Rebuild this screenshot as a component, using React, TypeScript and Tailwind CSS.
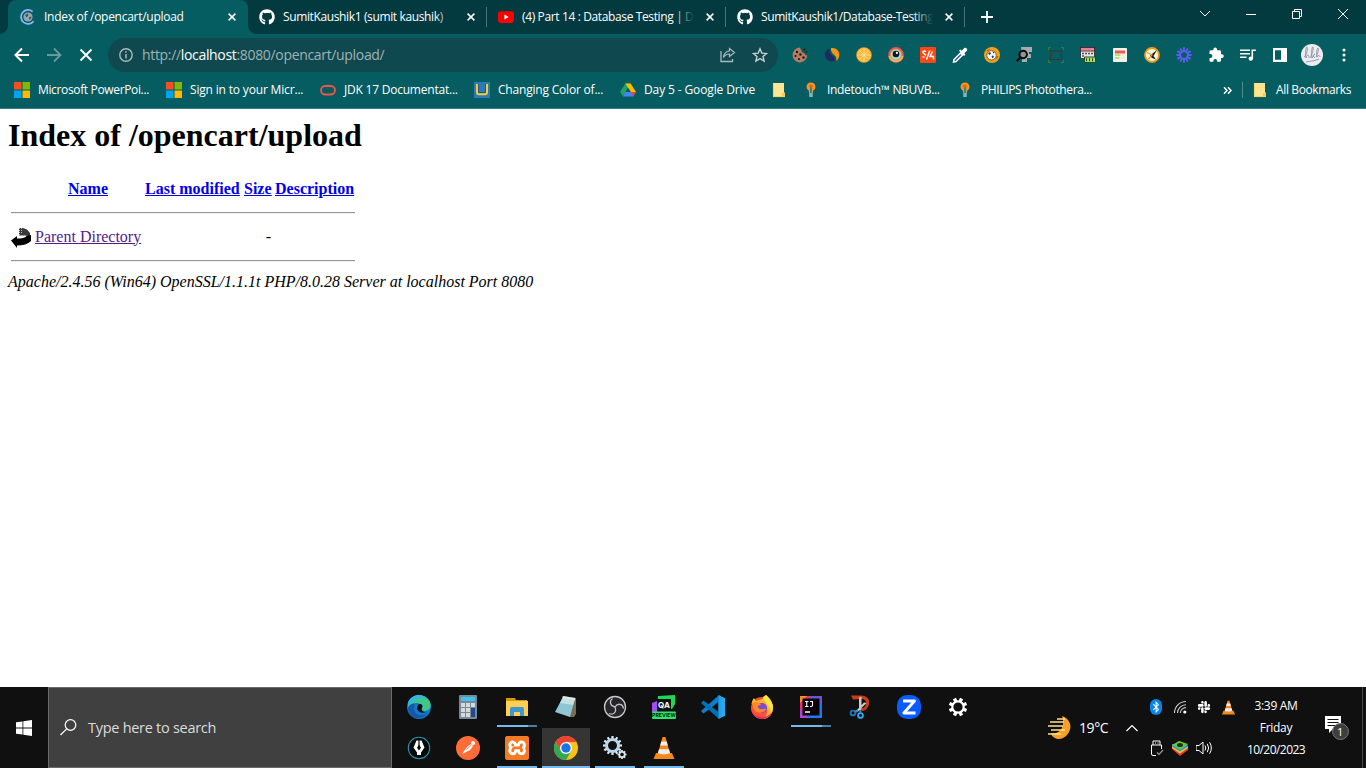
import type { ReactNode } from "react";
import { FaGithub, FaSlack, FaBluetoothB } from "react-icons/fa";
import { SiXampp } from "react-icons/si";

function Svg({ size = 16, box = 16, children }: { size?: number; box?: number; children: ReactNode }) {
  return (
    <svg width={size} height={size} viewBox={`0 0 ${box} ${box}`} fill="none" className="block shrink-0">
      {children}
    </svg>
  );
}

/* ---------- tab strip ---------- */

const Spinner = () => (
  <Svg>
    <path d="M12.6 2.6A7 7 0 1 0 13.6 12.2" stroke="#8ab4f8" strokeWidth="1.8" />
    <circle cx="8" cy="8" r="4.6" fill="#9aa5ad" />
    <path d="M5 6.2l2.4-1.7 1.2 1.3-1.8 2.6zM9 8.2l2.6-.6-.8 2.4-1.6.8z" fill="#2c5f66" />
  </Svg>
);
const YouTube = () => (
  <Svg>
    <rect y="2.3" width="16" height="11.6" rx="2.8" fill="#f00" />
    <path d="M6.4 5.6v4.9L10.6 8z" fill="#fff" />
  </Svg>
);
const Close = () => (
  <Svg size={8} box={8}>
    <path d="M.6.6l6.8 6.8M7.4.6L.6 7.4" stroke="#fff" strokeWidth="1.5" />
  </Svg>
);

function Tab({ icon, title, track, active }: { icon: ReactNode; title: string; track: string; active?: boolean }) {
  return (
    <div
      className={`relative flex h-[34px] shrink-0 items-center pr-3 ${
        active ? "w-60 rounded-t-lg bg-[#055c61] pl-3" : "w-[239px] pl-[11px]"
      }`}
    >
      {icon}
      <div className="relative ml-2 h-5 w-[172px] overflow-hidden">
        <span className={`block whitespace-nowrap leading-5 text-white ${track}`}>{title}</span>
        {!active && <i className="absolute right-0 top-0 h-5 w-5 bg-gradient-to-r from-transparent to-[#033a40]" />}
      </div>
      <span className="ml-auto">
        <Close />
      </span>
      {!active && <i className="absolute right-0 top-[7px] h-5 w-px bg-[#4b7377]" />}
      {active && (
        <>
          <i className="absolute -left-2 bottom-0 size-2 bg-[radial-gradient(circle_at_0_0,#033a40_7.5px,#055c61_8px)]" />
          <i className="absolute -right-2 bottom-0 size-2 bg-[radial-gradient(circle_at_100%_0,#033a40_7.5px,#055c61_8px)]" />
        </>
      )}
    </div>
  );
}

function TabStrip() {
  return (
    <header className="flex h-[34px] shrink-0 bg-[#033a40] pl-2 text-xs">
      <Tab active icon={<Spinner />} title="Index of /opencart/upload" track="tracking-[-0.28px]" />
      <Tab icon={<FaGithub className="size-4 text-white" />} title="SumitKaushik1 (sumit kaushik)" track="tracking-[-0.37px]" />
      <Tab icon={<YouTube />} title="(4) Part 14 : Database Testing | D" track="tracking-[-0.37px]" />
      <Tab icon={<FaGithub className="size-4 text-white" />} title="SumitKaushik1/Database-Testing" track="tracking-[-0.4px]" />
      <div className="flex w-11 items-center justify-center">
        <Svg size={12} box={12}>
          <path d="M6 0v12M0 6h12" stroke="#fff" strokeWidth="1.8" />
        </Svg>
      </div>
      <div className="ml-auto flex h-7 w-[184px]">
        {[
          <path key="a" d="M1 3l5 5 5-5" />,
          <path key="b" d="M1 6.5h10" />,
          <path key="c" d="M1.5 3.5h7v7h-7zM3.5 3V1.500h7v7H9" />,
          <path key="d" d="M1 1l10 10M11 1L1 11" />,
        ].map((p, i) => (
          <span key={i} className="flex w-[46px] items-center justify-center">
            <Svg size={12} box={12}>
              <g stroke="#fff">{p}</g>
            </Svg>
          </span>
        ))}
      </div>
    </header>
  );
}

/* ---------- toolbar ---------- */

const loomRays = Array.from({ length: 12 }, (_, i) => i * 30);

const extensions: ReactNode[] = [
  <Svg>
    <path d="M8 .6a7.400 7.400 0 1 0 7.300 8 3 3 0 0 1-3-2.600 3 3 0 0 1-3-3A3 3 0 0 1 8 .6z" fill="#b57c64" />
    <g fill="#2b1713">
      <circle cx="5" cy="5" r="1.200" /><circle cx="3.500" cy="9" r="1.100" /><circle cx="8.400" cy="7.500" r="1.200" />
      <circle cx="7" cy="12" r="1.100" /><circle cx="11.500" cy="10.500" r="1.200" /><circle cx="12.500" cy="2.500" r="1" /><circle cx="14.400" cy="5" r=".8" />
    </g>
  </Svg>,
  <Svg>
    <path d="M5.500 1.500C1.500 3 0 7 1.500 10.500s5.500 5 9.500 3c.5-2.500-1-3.700-3-5.200S5 4.500 5.500 1.500z" fill="#1f2a63" />
    <path d="M7 1.200c4-1 8.500 2 8.300 6.800-.1 3-1.500 5-3.300 5.800 1-3 0-4.500-2-6C8 6 6.500 3.500 7 1.200z" fill="#f6960f" />
  </Svg>,
  <Svg>
    <circle cx="8" cy="8" r="7.800" fill="#f79d1e" />
    <circle cx="8" cy="8" r="6.300" fill="#ffb52f" stroke="#ffd98c" strokeWidth=".8" />
    <path d="M8 2.500v11M2.500 8h11M4 4l8 8M12 4l-8 8" stroke="#ffe3a0" strokeWidth=".9" />
  </Svg>,
  <Svg>
    <circle cx="8" cy="8" r="7.900" fill="#e4574c" />
    <path d="M.5 9a7.600 7.600 0 0 0 15 0z" fill="#e8b94e" />
    <circle cx="8" cy="7.800" r="6" fill="#f08c6a" />
    <circle cx="8" cy="7.600" r="5.200" fill="#9fd6c4" />
    <circle cx="8" cy="7" r="3.300" fill="#10191f" />
    <circle cx="8.900" cy="5.900" r="1.100" fill="#fff" />
  </Svg>,
  <Svg>
    <rect width="16" height="16" rx="1" fill="#ff4713" />
    <path d="M6 4.200H3.200v1.600L6 8.500M9.800 3.500L6.500 12.500M2.500 10h2M12.500 4.500l-2.500 5h4M13.500 9.500v3" stroke="#fff" strokeWidth="1.500" />
  </Svg>,
  <Svg>
    <path d="M2 12.500L8.500 6l2 2L4 14.500l-2.500.500z" fill="#2d55a5" stroke="#fff" strokeWidth="1.500" />
    <path d="M7 3.800L8.500 2.500l1.300 1.200L12 1.300c1.600-1.600 4.300 1 2.700 2.700L12.300 6.200l1.200 1.300L12 9z" fill="#fff" />
  </Svg>,
  <Svg>
    <circle cx="8" cy="8" r="8" fill="#f5a01c" />
    <circle cx="7.500" cy="8.300" r="4.700" fill="#f5f5f5" stroke="#4a3b28" strokeWidth=".7" />
    <path d="M4 6.500l2-1.500 1 1.500-1.500 1.500zM7.500 9l1.500-.5 1 1.500-1.500 1.200zM8.500 4.200l2 1.300-1.200.9z" fill="#36343b" />
    <path d="M3 4l2.500-1.500M12 12l2-3" stroke="#845819" />
  </Svg>,
  <Svg>
    <path d="M5 0h11v5h-3v2h2v4h-4v4H6v-3z" fill="#a6adaf" />
    <circle cx="7.200" cy="7.500" r="3.700" stroke="#090b0c" strokeWidth="2" fill="#8d9799" />
    <path d="M4.500 10.300L.7 14.200" stroke="#090b0c" strokeWidth="2.200" />
  </Svg>,
  <Svg>
    <path d="M.5 3V.5H3M13 .5h2.500V3M15.500 13v2.500H13M3 15.500H.5V13" stroke="#3f7c25" />
    <rect x="2.500" y="3.700" width="11" height="9" rx="1" stroke="#373b3c" strokeWidth="1.300" />
  </Svg>,
  <Svg>
    <path d="M0 0h15v11H0z" fill="#e9e4e5" />
    <path d="M0 0h15v3.500H0z" fill="#f0808f" />
    <path d="M0 .5h15M.5 0v11M14.500 0v10M1 4h13" stroke="#30242a" strokeWidth=".9" />
    <path d="M2 6.500h11M2 9h3" stroke="#5a5155" strokeDasharray="2 1" strokeWidth="1.400" />
    <path d="M4.500 10h11v5.500h-11z" fill="#a4e06e" stroke="#244c20" />
    <path d="M6 12.700h8" stroke="#244c20" strokeDasharray="1 2" strokeWidth="3" />
  </Svg>,
  <Svg>
    <rect x="1" y="1" width="14" height="14" rx=".8" fill="#f4f2ed" />
    <path d="M3 3.500h10v3H3z" fill="#f2564e" />
    <path d="M3 8h5.500M3 11h4.500" stroke="#9fe148" strokeWidth="1.400" />
    <path d="M10 8h3M9 11h4" stroke="#ddd" />
  </Svg>,
  <Svg>
    <circle cx="8" cy="8" r="7" fill="#fff4df" stroke="#f09b19" strokeWidth="1.800" />
    <path d="M6 8.500l7-5.500-3.500 6L12 12.500 8 11z" fill="#1d1b18" />
    <path d="M3 5.500L8 8l-3.500 4" stroke="#f09b19" strokeWidth="1.200" />
  </Svg>,
  <Svg>
    {loomRays.map((a) => (
      <path key={a} d="M8 .3v4.500" stroke="#625df5" strokeWidth="1.800" transform={`rotate(${a} 8 8)`} />
    ))}
    <circle cx="8" cy="8" r="3.700" stroke="#625df5" strokeWidth="1.500" />
  </Svg>,
  <Svg>
    <path d="M13.300 7.600h-.9V5a1.300 1.300 0 0 0-1.300-1.300H8.400v-1a1.800 1.800 0 0 0-3.600 0v1H2.200A1.300 1.300 0 0 0 .9 5v2.500h1a1.900 1.900 0 0 1 0 3.800h-1V14a1.200 1.200 0 0 0 1.300 1.200h2.500v-.9a1.900 1.900 0 0 1 3.800 0v.9h2.600a1.300 1.300 0 0 0 1.300-1.300v-2.600h.9a1.850 1.850 0 0 0 0-3.700z" fill="#fff" transform="translate(.6 -.4)" />
  </Svg>,
  <Svg>
    <path d="M0 3.200h10M0 6.700h10M0 10.200h6.500" stroke="#fff" strokeWidth="1.500" />
    <path d="M15.800 3.200h-3.500v8.500" stroke="#fff" strokeWidth="1.600" />
    <circle cx="10.800" cy="11.600" r="2.200" fill="#fff" />
  </Svg>,
  <Svg>
    <path d="M1 1h14v14H1zM3 3.200v9.600h6V3.200z" fill="#fff" fillRule="evenodd" />
  </Svg>,
  <Svg size={22} box={22}>
    <circle cx="11" cy="11" r="11" fill="#ececf0" />
    <path d="M3 13c3-2 4-9 3-10s-2 7-1 11c1-4 3-4 3 0M9 14c2-3 4-10 3-11s-2 7-1 11c1-2 2-4 3-4l-2 2 2 2M15 13c2-3 3-9 2-9s-2 6-1 9c1-2 3-2 3 0M5 18c5-1 9-1 13-3" stroke="#85859a" strokeWidth=".8" />
  </Svg>,
  <Svg>
    <g fill="#fff">
      <circle cx="8" cy="3" r="1.500" /><circle cx="8" cy="8" r="1.500" /><circle cx="8" cy="13" r="1.500" />
    </g>
  </Svg>,
];

function Toolbar() {
  return (
    <div className="flex h-[42px] shrink-0 items-center bg-[#055c61]">
      <div className="flex w-[108px] shrink-0 items-center gap-4 pl-[14px]">
        <Svg>
          <path d="M15 8H2M8 1.500L1.500 8 8 14.500" stroke="#fff" strokeWidth="2" />
        </Svg>
        <Svg>
          <path d="M1 8h13M8 1.500L14.500 8 8 14.500" stroke="#69999c" strokeWidth="1.800" />
        </Svg>
        <Svg>
          <path d="M2.500 2.500l11 11M13.500 2.500l-11 11" stroke="#fff" strokeWidth="1.900" />
        </Svg>
      </div>
      <div className="flex h-[34px] w-[670px] shrink-0 items-center rounded-full bg-[#0f484e] pl-[11px] pr-[10px]">
        <Svg size={14} box={14}>
          <circle cx="7" cy="7" r="6.200" stroke="#a9bbbd" strokeWidth="1.400" />
          <path d="M7 6v4.500M7 3.300v1.500" stroke="#a9bbbd" strokeWidth="1.500" />
        </Svg>
        <span className="ml-[9px] whitespace-nowrap text-sm leading-5 tracking-[-0.33px] text-[#9fb3b5]">
          http://<b className="font-normal text-white">localhost</b>:8080/opencart/upload/
        </span>
        <div className="ml-auto flex gap-4">
          <Svg>
            <path d="M1 4v10.500h11.500V12" stroke="#a9bbbd" strokeWidth="1.300" />
            <path d="M9.500 1.500l5 4-5 4V7C6.500 7 5 8 3.500 10.500 4 6.500 6 4.200 9.500 3.800z" stroke="#a9bbbd" strokeWidth="1.200" />
          </Svg>
          <Svg>
            <path d="M8 1.800l1.800 4.300 4.700.4-3.500 3 1.100 4.600L8 11.600l-4.100 2.500L5 9.500l-3.500-3 4.700-.4z" stroke="#c3cfd0" strokeWidth="1.400" />
          </Svg>
        </div>
      </div>
      <div className="ml-1.5 flex">
        {extensions.map((icon, i) => (
          <span key={i} className="flex h-8 w-8 items-center justify-center">
            {icon}
          </span>
        ))}
      </div>
    </div>
  );
}

/* ---------- bookmarks ---------- */

const Microsoft = () => (
  <Svg>
    <path d="M0 0h7.500v7.500H0z" fill="#f25022" />
    <path d="M8.500 0H16v7.500H8.500z" fill="#7fba00" />
    <path d="M0 8.500h7.500V16H0z" fill="#00a4ef" />
    <path d="M8.500 8.500H16V16H8.500z" fill="#ffb900" />
  </Svg>
);
const Oracle = () => (
  <Svg>
    <rect x="1" y="4" width="14" height="8.500" rx="4.200" stroke="#e85848" strokeWidth="1.900" />
  </Svg>
);
const Unity = () => (
  <Svg>
    <path d="M0 0h16v16H0z" fill="#2b7bba" />
    <path d="M3 2v8.500a1.800 1.800 0 0 0 1.800 1.800h6.400a1.800 1.800 0 0 0 1.800-1.800V2" stroke="#f4cf2c" strokeWidth="2" />
    <path d="M4.500 2v8.500h7V2" stroke="#1c4f7c" strokeWidth=".8" />
  </Svg>
);
const Drive = () => (
  <Svg>
    <path d="M5.400 1.500h5.200L5.500 10.300 2.700 14 0 9.800z" fill="#1ea362" />
    <path d="M5.400 1.500h5.200L16 10h-5.200z" fill="#ffba00" />
    <path d="M5.200 10H16l-2.700 4.400H2.700z" fill="#4285f4" />
    <path d="M10.800 10H16l-2.700 4.400z" fill="#ea4335" />
    <path d="M8 6l2.500 4h-5z" fill="#075b60" />
  </Svg>
);
const Note = () => (
  <Svg>
    <path d="M2 1h11v9.500h1V15H2z" fill="#ffe593" />
    <path d="M2.400 1v13.600H14" stroke="#f2cd50" strokeWidth=".8" />
    <path d="M11 11h3v3.500h-3z" fill="#f3cc4e" />
  </Svg>
);
const Bulb = () => (
  <Svg>
    <path d="M8 .5a4.300 4.300 0 0 0-2.300 8L6.200 11h3.600l.5-2.500A4.300 4.300 0 0 0 8 .5z" fill="#f79420" />
    <path d="M7 4h2v7H7z" fill="#2b8790" />
    <path d="M6.200 11h3.600v4H6.200z" fill="#7db6bd" />
    <circle cx="8" cy="4.300" r="1.800" fill="#cf6a1c" />
  </Svg>
);

function Bookmark({ icon, label, box, track = "" }: { icon: ReactNode; label?: string; box: string; track?: string }) {
  return (
    <div className={`flex shrink-0 items-center gap-2 ${box}`}>
      {icon}
      {label && <span className={`whitespace-nowrap text-white ${track}`}>{label}</span>}
    </div>
  );
}

function Bookmarks() {
  return (
    <nav className="flex h-[33px] shrink-0 border-b border-[#3d7d81] bg-[#055c61] pb-1 pl-[14px] text-xs">
      <Bookmark icon={<Microsoft />} label="Microsoft PowerPoi..." box="w-[152px]" track="tracking-[-0.35px]" />
      <Bookmark icon={<Microsoft />} label="Sign in to your Micr..." box="w-[154px]" track="tracking-[-0.17px]" />
      <Bookmark icon={<Oracle />} label="JDK 17 Documentat..." box="w-[154px]" track="tracking-[-0.22px]" />
      <Bookmark icon={<Unity />} label="Changing Color of..." box="w-[146px]" track="tracking-[-0.2px]" />
      <Bookmark icon={<Drive />} label="Day 5 - Google Drive" box="w-[151px]" track="tracking-[-0.12px]" />
      <Bookmark icon={<Note />} box="w-8" />
      <Bookmark icon={<Bulb />} label="Indetouch™ NBUVB..." box="w-[154px]" track="tracking-[-0.33px]" />
      <Bookmark icon={<Bulb />} label="PHILIPS Photothera..." box="w-[140px]" track="tracking-[-0.37px]" />
      <div className="ml-auto flex items-center pr-[15px]">
        <Svg size={9} box={9}>
          <path d="M1 1.200l3 3.300-3 3.300M5 1.200l3 3.300-3 3.300" stroke="#fff" strokeWidth="1.500" />
        </Svg>
        <i className="ml-[10px] h-4 w-px bg-[#4f8b8f]" />
        <div className="ml-[9px] flex w-[99px] items-center gap-2">
          <Note />
          <span className="whitespace-nowrap tracking-[-0.37px] text-white">All Bookmarks</span>
        </div>
      </div>
    </nav>
  );
}

/* ---------- directory listing ---------- */

const BackIcon = () => (
  <svg width="20" height="22" viewBox="0 0 20 22" className="block">
    <path d="M8 2h4l4 1.500 3 3.500v5l-4-2.500H8z" fill="#3a3a3a" />
    <path d="M8.500 2v7M10.500 2v6" stroke="#bbb" strokeDasharray="1 1" />
    <path d="M0 14.500L6 10v2.500c5 0 8-.5 9.500-2.500L20 9v6c-3 3-8 4.500-14 4.500V22z" fill="#000" />
  </svg>
);

function Listing() {
  const cols = "grid grid-cols-[20px_106px_95px_27px_79px] gap-x-1";
  return (
    <main className="min-h-0 flex-1 bg-white px-2 pt-2 font-['Liberation_Serif',serif] text-base leading-[18px] text-black">
      <h1 className="text-[32px] font-bold leading-[37px]">Index of /opencart/upload</h1>
      <div className="ml-[3px] mt-[23px] w-[344px]">
        <div className={`${cols} h-[35px] pt-[3px] font-bold text-[#0000ee] underline`}>
          <span />
          <a className="text-center">Name</a>
          <a className="whitespace-nowrap">Last modified</a>
          <a>Size</a>
          <a>Description</a>
        </div>
        <hr className="h-0.5 border-0 border-t border-[#9a9a9a] bg-[#eee]" />
        <div className={`${cols} h-[46px] items-center pb-px`}>
          <BackIcon />
          <a className="whitespace-nowrap text-[#551a8b] underline">Parent Directory</a>
          <span />
          <span className="text-right">-</span>
        </div>
        <hr className="h-0.5 border-0 border-t border-[#9a9a9a] bg-[#eee]" />
      </div>
      <address className="mt-[11px]">Apache/2.4.56 (Win64) OpenSSL/1.1.1t PHP/8.0.28 Server at localhost Port 8080</address>
    </main>
  );
}

/* ---------- taskbar ---------- */

const Vlc = ({ size = 24 }: { size?: number }) => (
  <Svg size={size} box={24}>
    <path d="M4 17h16l2.500 6H1.500z" fill="#f28a17" />
    <path d="M10.500 1h3L18.500 19c-2 2-11 2-13 0z" fill="#f58a1c" />
    <path d="M9.300 5.500h5.400l1.100 4H8.200zM7 13.200h10l1.100 3.800c-3 1.800-9.200 1.800-12.200 0z" fill="#eee" />
  </Svg>
);

const apps: Record<string, ReactNode> = {
  edge: (
    <Svg size={24} box={24}>
      <circle cx="12" cy="12" r="12" fill="#0f78c9" />
      <path d="M1 8C4-1 18-3 23 7c2 5-1 9-5 9-3 0-4-1-3-3 1-5-8-8-14-1z" fill="#42c58a" />
      <path d="M1 8C4-1 15-2 19 3 13 2 8 4 1 12z" fill="#34b5e3" />
      <path d="M8 9c-4 8 4 15 13 9-6 8-19 7-20-5 1-3 4-5 7-4z" fill="#1658a8" />
      <path d="M12 9c4 0 4 2 3 4s0 4 4 4c-5 2-9-1-9-4 0-2 1-3 2-4z" fill="#101010" />
    </Svg>
  ),
  calc: (
    <Svg size={24} box={24}>
      <rect x="3" width="18" height="24" rx="1" fill="#7b8794" />
      <path d="M5 2h14v4H5z" fill="#3fc3f3" />
      <path d="M5 8h4v4H5zM10 8h4v4h-4zM15 8h4v4h-4zM5 13h4v4H5zM10 13h4v4h-4zM5 18h4v4H5zM10 18h4v4h-4z" fill="#d5dade" />
      <path d="M15 13h4v9h-4z" fill="#1b4b92" />
    </Svg>
  ),
  files: (
    <Svg size={24} box={24}>
      <path d="M1 3h9l1 2h11v5H1z" fill="#d9970c" />
      <path d="M1 6h22v15H1z" fill="#ffcf53" />
      <path d="M5 21v-7a2 2 0 0 1 2-2h10a2 2 0 0 1 2 2v7h-4v-4H9v4z" fill="#3e97d3" />
    </Svg>
  ),
  notepad: (
    <Svg size={24} box={24}>
      <path d="M8 1l14 2v16L20 22l-4 0z" fill="#7a6b55" />
      <path d="M9 2l12 2-5 18L1 17z" fill="#8ec7d2" />
      <path d="M9 2l12 2-2 6L6 8z" fill="#c3e0e5" />
      <path d="M9 2l12 2" stroke="#e7e7e7" strokeWidth="2" />
    </Svg>
  ),
  obs: (
    <Svg size={24} box={24}>
      <circle cx="12" cy="12" r="10.500" fill="#25252a" stroke="#c9c9cc" strokeWidth="1.300" />
      <g stroke="#c2c2c6" strokeWidth="1.300">
        <path d="M12 12C7 11 6 6 9.500 3.500" />
        <path d="M12 12c3-4.500 8-3 8.500 1.500" />
        <path d="M12 12c2 5-1.500 8.500-6 6.500" />
      </g>
    </Svg>
  ),
  qa: (
    <Svg size={24} box={24}>
      <path d="M6 1l17-1v9l-3 5H5z" fill="#1dd85b" />
      <path d="M0 8l5-2v11H0z" fill="#a64bf4" />
      <path d="M5 4h14v13H5z" fill="#07130c" />
      <text x="12" y="12.500" textAnchor="middle" fontSize="8" fontWeight="700" fill="#fff" fontFamily="Inter">QA</text>
      <rect y="16.500" width="24" height="7.500" rx="1" fill="#2ce66b" />
      <text x="12" y="22.300" textAnchor="middle" fontSize="5.200" fontWeight="700" fill="#06250f" fontFamily="Inter">PREVIEW</text>
    </Svg>
  ),
  vscode: (
    <Svg size={24} box={24}>
      <path d="M17.500.500L24 3v18l-6.500 2.500z" fill="#27a9f1" />
      <path d="M17.500.500L0 16l2.500 2.500L18 6.500z" fill="#0b7fd0" />
      <path d="M17.500 23.500L0 8l2.500-2.500L18 17.500z" fill="#0070b8" />
      <path d="M17.500 0v24L20 23V1z" fill="#1fa0ea" />
    </Svg>
  ),
  firefox: (
    <Svg size={24} box={24}>
      <circle cx="12" cy="13" r="11" fill="#ff4f3c" />
      <path d="M1.500 9C2 6 3 4 4 3l2 3 6-2 4-4c5 4 7 8 7 13 0 6-4 10-9 11 4-5 5-13-1-16z" fill="#ffb52e" />
      <path d="M13 2l3-2c4 4 7 8 7 13l-2 5c0-8-6-8-8-16z" fill="#ffe640" />
      <circle cx="12" cy="13" r="5" fill="#7d49d9" />
      <path d="M2 8c4-2 8-1 9 2-4 0-4 3-1 4s5-1 6 0c-2 5-11 5-13-2z" fill="#ff8c20" />
      <path d="M2 16c3 7 14 9 20 1-2 8-16 10-20-1z" fill="#f02070" />
    </Svg>
  ),
  idea: (
    <Svg size={24} box={24}>
      <path d="M1 1h22v22H1z" fill="#2377f5" />
      <path d="M1 1h11L1 23z" fill="#e8316f" />
      <path d="M1 1h7l-7 7z" fill="#f98b2b" />
      <path d="M12 1h11v9z" fill="#7254d9" />
      <path d="M1 14l9 9H1z" fill="#a347d6" />
      <path d="M3.500 3.500h17v17h-17z" fill="#080308" />
      <path d="M6 6.500h3.500M6 11.500h3.500M7.750 6v6M11 6.500h2.500v3.800q0 1.200-1.400 1.200H11" stroke="#fff" strokeWidth="1.100" />
      <path d="M6 17h5" stroke="#fff" strokeWidth="1.500" />
    </Svg>
  ),
  snip: (
    <Svg size={24} box={24}>
      <path d="M3 .5h10c6 0 9 4 8 8.500s-4 7-7 7l-.5-3c3 0 4.500-2 4.500-5s-2-4-5-4L5 4.500z" fill="#c93d16" />
      <path d="M11 2.500l2.500-1V15H11zM18.500 8L9 17.500l-1.500-1L16 7.500z" fill="#c9cdd0" />
      <circle cx="5" cy="18" r="2.400" stroke="#2173b8" strokeWidth="1.900" />
      <circle cx="12.500" cy="20.500" r="2.400" stroke="#39a4e3" strokeWidth="1.900" />
      <path d="M7 16.500l3-1M12.300 18v-3" stroke="#2e8ccf" strokeWidth="2" />
    </Svg>
  ),
  zoom: (
    <Svg size={24} box={24}>
      <rect width="24" height="24" rx="10" fill="#0b5cff" />
      <path d="M6 6h11.500L6.800 18H18.500" stroke="#fff" strokeWidth="2.800" strokeLinejoin="round" />
    </Svg>
  ),
  settings: (
    <Svg size={20} box={20}>
      {[0, 45, 90, 135, 180, 225, 270, 315].map((a) => (
        <path key={a} d="M10 .8v4" stroke="#fff" strokeWidth="3.400" transform={`rotate(${a + 22.5} 10 10)`} />
      ))}
      <circle cx="10" cy="10" r="5.700" fill="#101010" stroke="#fff" strokeWidth="2.200" />
    </Svg>
  ),
  pen: (
    <Svg size={24} box={24}>
      <circle cx="12" cy="12" r="10.700" fill="#050809" stroke="#2f8fa8" strokeWidth="1.100" />
      <path d="M9.500 4.500h5l3 7-3.500 5v2.500h-4V16.500L6.500 11.500z" fill="#fff" />
      <path d="M12 4v7" stroke="#050809" strokeWidth="1.200" />
      <path d="M12 8.500l2 3.300-2 2.700-2-2.700z" fill="#050809" />
    </Svg>
  ),
  postman: (
    <Svg size={24} box={24}>
      <circle cx="12" cy="12" r="12" fill="#ff6c37" />
      <path d="M6 18l5-7 4-3 2 2-3 4-6 3z" fill="#fff" />
      <circle cx="17" cy="7" r="2" fill="#fff" />
      <path d="M10.500 13.500l5-4.500" stroke="#ff6c37" strokeWidth=".8" />
    </Svg>
  ),
  xampp: (
    <span className="flex size-6 items-center justify-center rounded-[3px] bg-[#f47b26]">
      <span className="flex size-5 items-center justify-center bg-white">
        <SiXampp className="size-6 shrink-0 text-[#f47b26]" />
      </span>
    </span>
  ),
  chrome: (
    <Svg size={24} box={24}>
      <circle cx="12" cy="12" r="12" fill="#fbc116" />
      <path d="M1.600 6A12 12 0 0 1 22.400 6H12L6.800 15z" fill="#ea4335" />
      <path d="M1.600 6A12 12 0 0 0 12 24l5.200-9L6.800 15z" fill="#34a853" />
      <circle cx="12" cy="12" r="6" fill="#fff" />
      <circle cx="12" cy="12" r="4.700" fill="#1a73e8" />
    </Svg>
  ),
  gears: (
    <Svg size={24} box={24}>
      {loomRays.map((a) => (
        <path key={a} d="M9.500 0v4" stroke="#dce8f2" strokeWidth="2.200" transform={`rotate(${a} 9.500 9.500)`} />
      ))}
      <circle cx="9.500" cy="9.500" r="6" stroke="#b9d6ea" strokeWidth="3" />
      {[0, 45, 90, 135, 180, 225, 270, 315].map((a) => (
        <path key={a} d="M19 14v2.500" stroke="#dce8f2" strokeWidth="1.700" transform={`rotate(${a} 19 18.500)`} />
      ))}
      <circle cx="19" cy="18.500" r="2.700" stroke="#dce8f2" strokeWidth="1.600" />
    </Svg>
  ),
  vlc: <Vlc />,
};

const row1 = ["edge", "calc", "files", "notepad", "obs", "qa", "vscode", "firefox", "idea", "snip", "zoom", "settings"];
const row2 = ["pen", "postman", "xampp", "chrome", "gears", "vlc"];
const grouped = ["files", "idea"];
const running = ["xampp", "gears", "vlc"];

function AppCell({ id }: { id: string }) {
  return (
    <div className="flex w-[49px] flex-col">
      <div className={`flex h-[38px] w-12 items-center justify-center pt-0.5 ${id === "chrome" ? "bg-[#353535]" : ""}`}>{apps[id]}</div>
      {grouped.includes(id) && (
        <div className="ml-1 flex h-0.5 w-10">
          <i className="h-0.5 w-[31px] bg-[#76b9ed]" />
          <i className="h-0.5 w-[9px] bg-[#4a7ea8]" />
        </div>
      )}
      {running.includes(id) && <i className="ml-1 h-0.5 w-10 bg-[#76b9ed]" />}
      {id === "chrome" && <i className="h-0.5 w-12 bg-[#76b9ed]" />}
    </div>
  );
}

const tray: ReactNode[] = [
  <span className="flex h-4 w-3 items-center justify-center rounded-md bg-[#0a84e8]">
    <FaBluetoothB className="size-3 text-white" />
  </span>,
  <Svg size={14} box={14}>
    <path d="M1.500 13A11.500 11.500 0 0 1 13 1.500M4.500 13A8.500 8.500 0 0 1 13 4.700M7.300 13A5.700 5.700 0 0 1 13 7.600" stroke="#ccc" strokeWidth="1.100" />
    <circle cx="11.800" cy="12" r="1.600" fill="#fff" />
  </Svg>,
  <FaSlack className="size-[14px] text-white" />,
  <Vlc size={15} />,
  <Svg>
    <path d="M5 5V1h7v4M3.500 5h10v4M3.500 5v9q0 1.500 1.500 1.500h3M7 3h1M9.500 3h1" stroke="#fff" />
    <path d="M9 12.500l2 2 4-4.500" stroke="#999" strokeWidth="1.200" />
  </Svg>,
  <Svg>
    <path d="M0 9l8 7 8-6V6L0 6z" fill="#e5392f" />
    <path d="M0 8l8 5.500L16 8V6H0z" fill="#f7c91d" />
    <path d="M0 6.500l8 5L16 6.500 15 4H0z" fill="#2a8fe0" />
    <path d="M0 5l7-4 9 3-7.500 6z" fill="#64c83c" />
    <ellipse cx="8" cy="5" rx="3" ry="2" fill="#1d3320" />
  </Svg>,
  <Svg>
    <path d="M0 5.500h3l4-3.500v12l-4-3.500H0zM9 5.500q1.500 2.500 0 5M11.300 3.800q2.700 4.200 0 8.400M13.600 2.300q3.500 5.700 0 11.400" stroke="#fff" />
  </Svg>,
];

function Taskbar() {
  return (
    <footer className="flex h-[81px] shrink-0 bg-[#101010] text-white">
      <div className="flex w-12 items-center justify-center">
        <Svg>
          <path d="M0 2.300L6.500 1.400v6.200H0zM7.300 1.200L16 0v7.600H7.300zM0 8.400h6.500v6.200L0 13.700zM7.300 8.400H16V16l-8.700-1.200z" fill="#fff" />
        </Svg>
      </div>
      <div className="flex w-[344px] items-center border border-[#6a6a6a] bg-[#404040] pl-[11px]">
        <Svg size={17} box={17}>
          <circle cx="10.500" cy="6" r="5.300" stroke="#fff" strokeWidth="1.200" />
          <path d="M6.700 9.800L.5 16" stroke="#fff" strokeWidth="1.200" />
        </Svg>
        <span className="ml-[11px] whitespace-nowrap text-[14.5px] tracking-[-0.28px] text-[#dcdcdc]">Type here to search</span>
      </div>
      <div className="ml-[3px] flex flex-col">
        <div className="flex h-[41px]">{row1.map((id) => <AppCell key={id} id={id} />)}</div>
        <div className="flex h-10">{row2.map((id) => <AppCell key={id} id={id} />)}</div>
      </div>
      <div className="ml-auto flex items-center">
        <Svg size={24} box={24}>
          <path d="M15 0c9 3 11 12 5 19S5 23 4 17c8 2 15-6 11-17z" fill="#f6a028" />
          <path d="M3 6h14M1 10h15M4 14h14M1 18h13M10 3h8" stroke="#ffdf8c" strokeWidth="1.600" />
        </Svg>
        <span className="ml-2 w-[30px] whitespace-nowrap pt-px text-sm tracking-[-0.4px]">19°C</span>
        <span className="ml-[17px]">
          <Svg size={12} box={12}>
            <path d="M.5 9L6 3.500 11.500 9" stroke="#fff" strokeWidth="1.200" />
          </Svg>
        </span>
        <div className="ml-[6px] flex h-full w-24 flex-wrap">
          {tray.map((icon, i) => (
            <span key={i} className="flex h-10 w-6 items-center justify-center">{icon}</span>
          ))}
        </div>
        <div className="flex h-full w-[72px] flex-col items-center pt-2 text-xs leading-[22px]">
          <span className="tracking-[-0.3px]">3:39 AM</span>
          <span className="tracking-[-0.3px]">Friday</span>
          <span className="tracking-[-0.55px]">10/20/2023</span>
        </div>
        <div className="relative ml-3 h-[26px] w-[26px]">
          <Svg size={26} box={26}>
            <path d="M1 1h16v13H9l-4 4v-4H1z" fill="#fff" />
            <path d="M3.500 4.500h11M3.500 7.500h11M3.500 10.500h8" stroke="#101010" />
            <circle cx="16.500" cy="16.500" r="8" fill="#3e3e3e" stroke="#777" />
          </Svg>
          <span className="absolute left-[13px] top-[9px] text-[11px] leading-4">1</span>
        </div>
        <i className="ml-3 h-full w-px bg-[#4a4a4a]" />
        <i className="w-[3px]" />
      </div>
    </footer>
  );
}

export default function App() {
  return (
    <div className="flex h-screen w-[1366px] flex-col overflow-hidden font-['Open_Sans','Noto_Sans',sans-serif]">
      <TabStrip />
      <Toolbar />
      <Bookmarks />
      <Listing />
      <Taskbar />
    </div>
  );
}
